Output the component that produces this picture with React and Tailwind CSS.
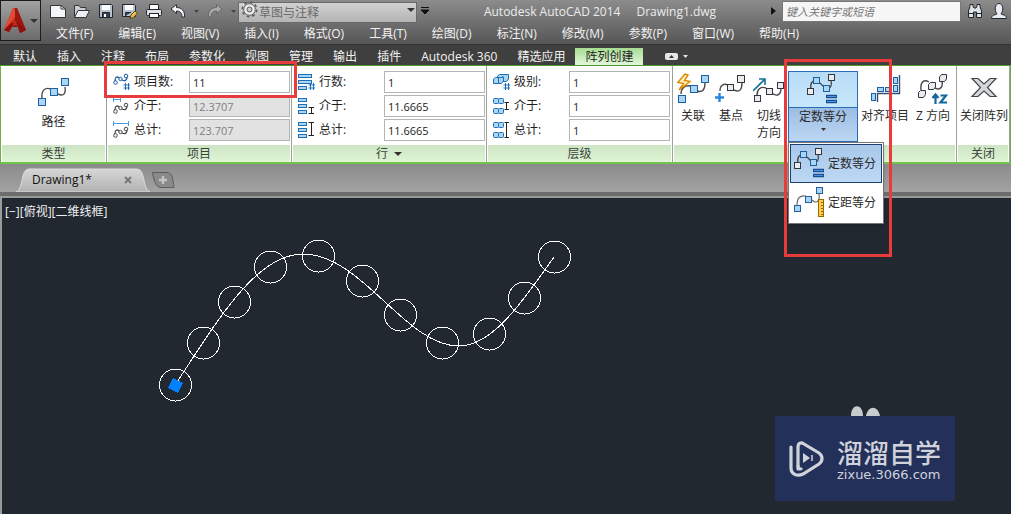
import { useState } from "react";

const MENUS = [
  "文件(F)", "编辑(E)", "视图(V)", "插入(I)", "格式(O)", "工具(T)",
  "绘图(D)", "标注(N)", "修改(M)", "参数(P)", "窗口(W)", "帮助(H)",
];

const TABS = [
  "默认", "插入", "注释", "布局", "参数化", "视图",
  "管理", "输出", "插件", "Autodesk 360", "精选应用", "阵列创建",
];

const CIRCLES = [
  [175, 385], [203, 343], [234, 302], [270, 267], [318, 256], [362, 281],
  [400, 315], [442, 343], [489, 334], [524, 298], [554, 257],
];

const BLUE = { fill: "#a9d6f5", stroke: "#1f5f9e" };
const GREY = { fill: "#e9ebee", stroke: "#33373c" };

/* ---------- large ribbon icons ---------- */

function Node({ x, y, s = 7, tone = BLUE }) {
  return <rect x={x + 0.5} y={y + 0.5} width={s} height={s} {...tone} />;
}

function Icon({ w = 32, h = 32, children, className = "" }) {
  return (
    <svg width={w} height={h} viewBox={`0 0 ${w} ${h}`} fill="none" className={`shrink-0 ${className}`} aria-hidden="true">
      {children}
    </svg>
  );
}

function PathIcon() {
  return (
    <Icon>
      <path d="M4 22C3 13 7 10 13 12M20 17C26 20 28 16 27 10" stroke="#4a4a4a" strokeWidth="1.4" />
      <Node x={23} y={1} /><Node x={12} y={11} /><Node x={0} y={21} />
    </Icon>
  );
}

function AssociateIcon() {
  return (
    <Icon>
      <path d="M4 21C4 15 8 12 13 13M20 18C26 20 28 16 28 10" stroke="#4a4a4a" strokeWidth="1.4" />
      <Node x={24} y={2} /><Node x={13} y={12} /><Node x={1} y={22} />
      <path d="M8 1L0.8 9.5L6.5 10.5L2 17L13 8.5L7.5 7.5L11 2Z" fill="#fff3c4" stroke="#e08a00" strokeWidth="1.4" />
    </Icon>
  );
}

function BasePointIcon() {
  return (
    <Icon>
      <path d="M5 18C5 12 9 10 13 12M19 17C25 20 27 16 27 10" stroke="#4a4a4a" strokeWidth="1.4" />
      <Node x={22} y={2} tone={GREY} /><Node x={12} y={11} s={6} tone={GREY} />
      <path d="M4.5 20V29M0 24.5H9" stroke="#2a86d8" strokeWidth="2.4" />
    </Icon>
  );
}

function TangentIcon() {
  return (
    <Icon>
      <path d="M4 22C4 16 8 13 13 15M19 20C25 25 28 20 28 16" stroke="#4a4a4a" strokeWidth="1.4" />
      <Node x={24} y={9} s={6} tone={GREY} /><Node x={13} y={15} s={6} tone={GREY} /><Node x={1} y={22} s={6} tone={GREY} />
      <path d="M0 18L12 6M6 6H12V12" stroke="#13729a" strokeWidth="1.6" />
    </Icon>
  );
}

function DivideIcon() {
  return (
    <Icon>
      <path d="M4 16C3 9 5 7 8 7M13 9L18 14M22 14C24 13 25 10 24 7" stroke="#4a4a4a" strokeWidth="1.4" />
      <Node x={21} y={0} s={6} tone={GREY} /><Node x={6} y={3} s={6} /><Node x={16} y={11} s={6} /><Node x={0} y={14} s={6} tone={GREY} />
      <path d="M19 22.5H30M19 27.5H30" stroke="#1a4f93" strokeWidth="3.4" />
      <path d="M20 22.5H29M20 27.5H29" stroke="#4b93dc" />
    </Icon>
  );
}

function MeasureIcon() {
  return (
    <Icon>
      <path d="M3 18C3 11 6 8 12 9M18 13C23 18 26 13 25 7" stroke="#6b6b6b" strokeWidth="1.2" />
      <Node x={22} y={0} s={6} /><Node x={11} y={9} s={6} /><Node x={0} y={18} s={6} />
      <rect x="24.5" y="12.5" width="5" height="17" fill="#ffd04a" stroke="#9a6a00" />
      <path d="M27 15.5H29M27 18.5H29M27 21.5H29M27 24.5H29M27 27.5H29" stroke="#9a6a00" />
    </Icon>
  );
}

function AlignIcon() {
  return (
    <Icon>
      <path d="M30.5 2V20.5H8.5V29" stroke="#33506e" strokeWidth="1.4" />
      <g {...BLUE}>
        <rect x="2.5" y="20.5" width="4" height="7" />
        <rect x="8.5" y="14.5" width="6" height="4" />
        <rect x="16.5" y="14.5" width="6" height="4" />
        <rect x="24.5" y="12.5" width="4" height="6" />
        <rect x="24.5" y="4.5" width="4" height="6" />
      </g>
    </Icon>
  );
}

function ZIcon() {
  return (
    <Icon>
      <path d="M4 17C3 9 7 6 12 9M18 15C24 18 26 13 25 8" stroke="#4a4a4a" strokeWidth="1.4" />
      <g {...GREY}>
        <path d="M22.5 4L24.5 1.5H29.5V6L27.5 8.5H22.5Z" />
        <path d="M11.5 11.5L13.5 9.5H18.5V14L16.5 16.5H11.5Z" />
        <path d="M1.5 19.5L3.5 17.5H8.5V21.5L6.5 24.5H1.5Z" />
      </g>
      <path d="M18.5 31V22M15.5 25L18.5 21.5L21.5 25M23.5 22.5H29L23.5 29.5H30" stroke="#14679c" strokeWidth="2.2" />
    </Icon>
  );
}

function CloseArrayIcon() {
  return (
    <Icon>
      <path
        d="M4 5.5H10L16 11L22 5.5H28L19.5 14.5L28 23.5H22L16 18L10 23.5H4L12.5 14.5Z"
        fill="#d4d6d9" stroke="#44484d" strokeWidth="1.2"
      />
    </Icon>
  );
}

/* ---------- small field icons ---------- */

const Hash = () => <path d="M12.5 10V17M15.5 10V17M10.5 12H17M10.5 15H17" stroke="#1e6fc0" />;

function ItemIcon({ kind }) {
  const stroke = kind === "count" ? "#1f5f9e" : "#4a4a4a";
  const dy = kind === "count" ? -2 : 3;
  return (
    <Icon w={17} h={18}>
      <g stroke={stroke} transform={`translate(0 ${dy})`} fill="#eef5fb">
        <path d="M2 10C2 6 4 5 6 7M9 9C13 11 14 8 14 6" fill="none" strokeWidth="1.3" />
        <circle cx="2.5" cy="11.5" r="1.8" /><circle cx="7.5" cy="8" r="1.7" /><circle cx="13" cy="5" r="1.8" />
      </g>
      {kind === "count" && <Hash />}
      {kind === "between" && <path d="M0.5 0V5M7.5 0V5M1 2.5H7" stroke="#4a9be0" />}
      {kind === "total" && <path d="M0.5 0V5M15.5 0V5M1 2.5H15" stroke="#4a9be0" />}
    </Icon>
  );
}

function RowIcon({ kind }) {
  const w = kind === "count" ? 13 : 8;
  return (
    <Icon w={17} h={18}>
      <g fill="#a9d6f5" stroke="#1f6fb5">
        <rect x="0.5" y="1.5" width={w} height="3" />
        <rect x="0.5" y="7.5" width={w} height="3" />
        <rect x="0.5" y="13.5" width="8" height="3" />
      </g>
      {kind === "count" && <Hash />}
      {kind === "between" && <path d="M10.5 10.5H16M10.5 16.5H16M13.5 10.5V16.5" stroke="#222" />}
      {kind === "total" && <path d="M10.5 1.5H16M10.5 14.5H16M13.5 1.5V14.5" stroke="#222" />}
    </Icon>
  );
}

function LevelIcon({ kind }) {
  return (
    <Icon w={17} h={18}>
      {kind === "count" ? (
        <g fill="#a9d6f5" stroke="#1f6fb5">
          <path d="M4.5 3L6.5 1.5H15.5V6L13.5 8.5H4.5ZM10 3V8" />
          <path d="M0.5 6L2.5 4.5H10.5V8L8.5 10.5H0.5ZM5.5 5V10" />
        </g>
      ) : (
        <g fill="#a9d6f5" stroke="#1f6fb5">
          <rect x="0.5" y="1.5" width="5" height="5" rx="1" />
          <rect x="5.5" y="1.5" width="5" height="5" rx="1" />
          <rect x="0.5" y="11.5" width="5" height="5" rx="1" />
          <rect x="5.5" y="11.5" width="5" height="5" rx="1" />
        </g>
      )}
      {kind === "count" && <Hash />}
      {kind === "between" && <path d="M11.5 5.5H16M11.5 12.5H16M13.5 5.5V12.5" stroke="#222" />}
      {kind === "total" && <path d="M11.5 1.5H16M11.5 16.5H16M13.5 1.5V16.5" stroke="#222" />}
    </Icon>
  );
}

/* ---------- title bar ---------- */

function Caret({ className = "text-[#333]" }) {
  return (
    <svg width="8" height="4" viewBox="0 0 8 4" className={`shrink-0 ${className}`} fill="currentColor" aria-hidden="true">
      <path d="M0 0H8L4 4Z" />
    </svg>
  );
}

function SmallCaret({ className }) {
  return (
    <svg width="5" height="3" viewBox="0 0 5 3" className={`shrink-0 ${className}`} fill="currentColor" aria-hidden="true">
      <path d="M0 0H5L2.5 3Z" />
    </svg>
  );
}

function QuickAccess() {
  return (
    <div className="flex items-center gap-2">
      <button aria-label="新建">
        <Icon w={16} h={16}><path d="M0.5 2.5H11L15.5 6V14.5H0.5Z" fill="#f4f5f7" stroke="#33373c" /><path d="M11 2.5V6H15.5" stroke="#33373c" /></Icon>
      </button>
      <button aria-label="打开">
        <Icon w={16} h={16}><path d="M0.5 14V2.5H5L6.5 4.5H12V7" fill="#c9ced6" stroke="#33373c" /><path d="M0.5 14.5L4 7.5H15.5L12 14.5Z" fill="#eef0f3" stroke="#33373c" /></Icon>
      </button>
      <button aria-label="保存">
        <Icon w={16} h={16}><path d="M1.5 1.5H13.5L14.5 2.5V14.5H1.5Z" fill="#b9c2cf" stroke="#20262e" /><rect x="4" y="2" width="8" height="5" fill="#fff" /><path d="M4.5 14V9.5H11.5V14" fill="#3a4453" stroke="#20262e" /><rect x="6" y="11" width="2" height="3" fill="#fff" /></Icon>
      </button>
      <button aria-label="另存为">
        <Icon w={16} h={16}><path d="M0.5 1.5H12.5L13.5 2.5V13.5H0.5Z" fill="#b9c2cf" stroke="#20262e" /><rect x="3" y="2" width="8" height="5" fill="#fff" /><path d="M3.5 13V9.5H9" fill="#3a4453" stroke="#20262e" /><path d="M8 15.5L9 12L13 8L15.5 10L11.5 14.5Z" fill="#f2c14e" stroke="#5b4410" /></Icon>
      </button>
      <button aria-label="打印">
        <Icon w={16} h={16}><path d="M3.5 6V1.5H12.5V6" fill="#fff" stroke="#20262e" /><rect x="0.5" y="6.5" width="15" height="6" rx="1" fill="#dde1e6" stroke="#20262e" /><rect x="3.5" y="10.5" width="9" height="4" fill="#fff" stroke="#20262e" /></Icon>
      </button>
      <button aria-label="放弃">
        <Icon w={16} h={16}><path d="M1 6L6.5 1.5V4.5C12 4.5 15 8 14.5 14H12C12 10 10 8 6.5 8V10.5Z" fill="#f1f3f6" stroke="#2b2f35" /></Icon>
      </button>
      <SmallCaret className="text-[#444]" />
      <button aria-label="重做">
        <Icon w={16} h={16}><path d="M15 6L9.5 1.5V4.5C4 4.5 1 8 1.5 14H4C4 10 6 8 9.5 8V10.5Z" fill="#a9abad" stroke="#676767" /></Icon>
      </button>
      <SmallCaret className="text-[#444]" />
    </div>
  );
}

function TitleBar() {
  return (
    <div className="flex h-[22px] items-center">
      <QuickAccess />
      <div className="relative ml-[2px] w-[179px] shrink-0">
        <svg className="pointer-events-none absolute left-[3px] top-[2px]" width="17" height="17" viewBox="0 0 17 17" fill="none" aria-hidden="true">
          <circle cx="8.5" cy="8.5" r="7.2" stroke="#5a5a5a" strokeWidth="1.6" strokeDasharray="2.8 2.85" />
          <circle cx="8.5" cy="8.5" r="5.8" fill="#ececec" stroke="#5a5a5a" />
          <circle cx="8.5" cy="8.5" r="2.5" fill="#c8c8c8" stroke="#5a5a5a" />
        </svg>
        <select aria-label="工作空间" className="h-[21px] w-full appearance-none border border-[#6a6a6a] bg-linear-to-b from-[#d2d2d2] to-[#b4b4b4] pl-5 text-[12px] leading-4 text-[#6b6b6b]">
          <option>草图与注释</option>
        </select>
        <Caret className="pointer-events-none absolute right-[2px] top-[9px] text-[#333]" />
      </div>
      <button aria-label="自定义快速访问工具栏" className="ml-1">
        <Icon w={8} h={8}><path d="M0 0.5H8M0 3H8L4 7Z" fill="#111" stroke="#111" /></Icon>
      </button>
      <div className="flex flex-1 justify-center gap-4 whitespace-nowrap pt-[2px] text-[12px] text-[#ececec]">
        <span>Autodesk AutoCAD 2014</span>
        <span>Drawing1.dwg</span>
      </div>
      <svg className="mr-[6px]" width="5" height="8" viewBox="0 0 5 8" aria-hidden="true"><path d="M0 0L5 4L0 8Z" fill="#111" /></svg>
      <input
        aria-label="搜索" placeholder="键入关键字或短语"
        className="h-[21px] w-[179px] border border-[#777] bg-[#f6f6f6] px-[3px] text-[11px] italic placeholder:text-[#777]"
      />
      <button aria-label="查找" className="ml-[6px]">
        <Icon w={16} h={16}>
          <path d="M1.5 14.5V8L3 3.5V1.5H6V3.5L7 5H9L10 3.5V1.5H13V3.5L14.5 8V14.5H9.5V9H6.5V14.5Z" fill="#dde3ea" stroke="#20262e" />
          <path d="M1.5 10.5H6.5M9.5 10.5H14.5" stroke="#20262e" />
        </Icon>
      </button>
      <button aria-label="登录" className="ml-2 mr-1">
        <Icon w={16} h={16}>
          <path d="M0.5 15.5C0.5 12 4 12 6 11C3 7 4 0.5 8 0.5C12 0.5 13 7 10 11C12 12 15.5 12 15.5 15.5Z" fill="#e9edf2" stroke="#20262e" />
        </Icon>
      </button>
    </div>
  );
}

function Header() {
  const [active, setActive] = useState("阵列创建");
  return (
    <header>
      <div className="flex h-[44px] bg-linear-to-b from-[#8c8c8c] to-[#565656]">
        <button aria-label="应用程序菜单" className="flex h-[41px] w-[41px] shrink-0 items-center justify-center gap-[3px] border border-[#1c1c1c] bg-linear-to-b from-[#a2a2a2] to-[#6b6b6b]">
          <svg width="24" height="28" viewBox="0 0 24 28" aria-hidden="true">
            <path d="M10 1H14L23 23L17 26L15 20L12 18L9 20L6 25L1 23Z" fill="#c62a1c" />
            <path d="M12 1H14L23 23L17 26L15 20L12 18Z" fill="#9c170f" />
            <path d="M10 1L12 2V10L4 20L1 23Z" fill="#e44a33" />
            <path d="M1 23L8 16H16L23 23L17 26L15 20H9L6 25Z" fill="#8b120c" />
            <path d="M9 20L12 13L15 20L12 18Z" fill="#c62a1c" />
          </svg>
          <Caret />
        </button>
        <div className="min-w-0 flex-1 pl-[9px]">
          <TitleBar />
          <nav className="flex h-[22px] items-center gap-[25px] whitespace-nowrap pl-[6px] pt-[2px] text-[12px] leading-4 text-[#f2f2f2]">
            {MENUS.map((m) => <button key={m}>{m}</button>)}
          </nav>
        </div>
      </div>
      <nav className="flex h-[21px] items-end whitespace-nowrap border-t border-[#333] bg-[#3f3f3f] pl-[3px] text-[12px] leading-4">
        {TABS.map((t) => (
          <button
            key={t}
            onClick={() => setActive(t)}
            className={`h-[17px] px-[10px] ${
              active === t
                ? "bg-linear-to-b from-[#a6dd92] to-[#e2f6da] text-[#222]"
                : "text-[#f2f2f2]"
            }`}
          >
            {t}
          </button>
        ))}
        <button aria-label="最小化功能区" className="ml-[22px] flex h-[18px] items-center gap-[5px]">
          <svg width="13" height="7" viewBox="0 0 13 7" aria-hidden="true"><rect width="13" height="7" rx="2" fill="#e6e6e6" /><path d="M4 5H9L6.5 2Z" fill="#333" /></svg>
          <SmallCaret className="text-[#e6e6e6]" />
        </button>
      </nav>
    </header>
  );
}

/* ---------- ribbon ---------- */

function Panel({ title, caret, children }) {
  return (
    <section className="relative flex min-w-0 flex-col border-r border-[#9aa39a] bg-white">
      <div className="flex-1 pt-[5px]">{children}</div>
      <h2 className="mx-px flex h-[17px] items-center justify-center gap-[6px] bg-linear-to-b from-[#cde4c5] to-[#dff5d5] text-[12px] leading-4 text-[#3b443b]">
        {title}{caret && <Caret />}
      </h2>
    </section>
  );
}

function Field({ id, icon, label, value, disabled, wide }) {
  return (
    <div className="flex h-[22px] items-center">
      {icon}
      <label htmlFor={id} className={`ml-1 shrink-0 text-[12px] text-[#1f1f1f] ${wide ? "w-[65px]" : "w-[55px]"}`}>{label}</label>
      <input
        id={id} defaultValue={value} disabled={disabled}
        className="h-[22px] w-0 flex-1 border border-[#b4b4b4] bg-white px-[3px] text-[11px] text-[#222] disabled:bg-[#e2e2e2] disabled:text-[#808080]"
      />
    </div>
  );
}

function ToolButton({ icon, label, className = "w-[38px]" }) {
  return (
    <button className={`flex shrink-0 flex-col items-center pt-[2px] text-[12px] leading-[17px] text-[#2b2b2b] ${className}`}>
      {icon}
      <span className="whitespace-pre-line pt-[2px]">{label}</span>
    </button>
  );
}

function DivideMethod() {
  const [method, setMethod] = useState("定数等分");
  const options = [
    { label: "定数等分", icon: <DivideIcon /> },
    { label: "定距等分", icon: <MeasureIcon /> },
  ];
  return (
    <div className="relative z-10 w-[70px] shrink-0">
      <button className="flex w-full flex-col items-center border border-[#2a6cb8] text-[12px] leading-[17px] text-[#2b2b2b]" aria-haspopup="menu">
        <span className="flex w-full justify-center bg-linear-to-b from-[#b9dcf6] to-[#c6e6fb] pb-px pt-[2px]"><DivideIcon /></span>
        <span className="flex h-[34px] w-full flex-col items-center border-t border-[#2a6cb8] bg-linear-to-b from-[#9cbde2] to-[#bcd7f3]">
          {method}
          <SmallCaret className="mt-[3px] text-[#333]" />
        </span>
      </button>
      <div role="menu" className="absolute left-0 top-full w-[96px] border border-[#777] bg-white p-px shadow-sm">
        {options.map((o) => (
          <button
            key={o.label} role="menuitem"
            onClick={() => setMethod(o.label)}
            className={`flex h-[39px] w-full items-center gap-[2px] whitespace-nowrap border pl-[3px] text-[12px] text-[#2b2b2b] ${
              method === o.label
                ? "border-[#1c3f6e] bg-linear-to-b from-[#a9c8ea] to-[#bcd8f4]"
                : "border-transparent"
            }`}
          >
            {o.icon}{o.label}
          </button>
        ))}
      </div>
      <div className="pointer-events-none absolute -left-1 -top-3 h-[198px] w-[108px] border-3 border-[#e83c3c]" />
    </div>
  );
}

function Ribbon() {
  return (
    <div className="grid h-[99px] grid-cols-[106fr_185fr_195fr_186fr_284fr_53fr] border-x border-b-2 border-t border-x-[#6fae4a] border-b-[#72c34e] border-t-[#4f9a2c]">
      <Panel title="类型">
        <button className="flex w-full flex-col items-center pt-[6px] text-[12px] leading-[17px] text-[#1f1f1f]">
          <PathIcon />
          <span className="pt-[4px]">路径</span>
        </button>
      </Panel>
      <Panel title="项目">
        <div className="flex flex-col gap-[2px] pl-[6px] pr-px">
          <Field id="items" icon={<ItemIcon kind="count" />} label="项目数:" value="11" />
          <Field id="items-between" icon={<ItemIcon kind="between" />} label="介于:" value="12.3707" disabled />
          <Field id="items-total" icon={<ItemIcon kind="total" />} label="总计:" value="123.707" disabled />
        </div>
        <div className="pointer-events-none absolute -left-[3px] -right-[6px] -top-[5px] z-10 h-[37px] border-3 border-[#e83c3c]" />
      </Panel>
      <Panel title="行" caret>
        <div className="flex flex-col gap-[2px] pl-[6px] pr-px">
          <Field id="rows" icon={<RowIcon kind="count" />} label="行数:" value="1" wide />
          <Field id="rows-between" icon={<RowIcon kind="between" />} label="介于:" value="11.6665" wide />
          <Field id="rows-total" icon={<RowIcon kind="total" />} label="总计:" value="11.6665" wide />
        </div>
      </Panel>
      <Panel title="层级">
        <div className="flex flex-col gap-[2px] pl-[6px] pr-[2px]">
          <Field id="levels" icon={<LevelIcon kind="count" />} label="级别:" value="1" />
          <Field id="levels-between" icon={<LevelIcon kind="between" />} label="介于:" value="1" />
          <Field id="levels-total" icon={<LevelIcon kind="total" />} label="总计:" value="1" />
        </div>
      </Panel>
      <Panel title="">
        <div className="flex items-start pl-px">
          <ToolButton icon={<AssociateIcon />} label="关联" />
          <ToolButton icon={<BasePointIcon />} label="基点" />
          <ToolButton icon={<TangentIcon />} label={"切线\n方向"} />
          <DivideMethod />
          <ToolButton icon={<AlignIcon />} label="对齐项目" className="w-[54px]" />
          <ToolButton icon={<ZIcon />} label="Z 方向" className="w-[42px]" />
        </div>
      </Panel>
      <Panel title="关闭">
        <ToolButton icon={<CloseArrayIcon />} label="关闭阵列" className="w-full whitespace-nowrap pl-[2px]" />
      </Panel>
    </div>
  );
}

/* ---------- drawing area ---------- */

function FileTabs() {
  return (
    <div className="flex h-[32px] items-start border-b-4 border-[#6c6c6c] bg-linear-to-b from-[#8b8b8b] to-[#a3a3a3] pl-[16px] pt-[4px]">
      <div className="relative flex h-6 w-[134px] items-center justify-between pl-4 pr-[18px] text-[12px] text-[#111]">
        <svg className="absolute inset-0 h-full w-full" viewBox="0 0 134 24" preserveAspectRatio="none" aria-hidden="true">
          <defs>
            <linearGradient id="tab" x1="0" y1="0" x2="0" y2="1"><stop offset="0" stopColor="#d6d6d6" /><stop offset="1" stopColor="#b2b2b2" /></linearGradient>
          </defs>
          <path d="M0 24C8 22 4 1 13 1H121C130 1 126 22 134 24Z" fill="url(#tab)" stroke="#dcdcdc" />
        </svg>
        <a href="#drawing" className="relative">Drawing1*</a>
        <button aria-label="关闭图形" className="relative">
          <svg width="8" height="8" viewBox="0 0 8 8" aria-hidden="true"><path d="M1 1L7 7M7 1L1 7" stroke="#777" strokeWidth="2" /></svg>
        </button>
      </div>
      <button aria-label="新图形" className="ml-[2px] mt-[3px]">
        <svg width="23" height="17" viewBox="0 0 23 17" aria-hidden="true">
          <path d="M0.5 1.5H15C20 1.5 21 8 22 16.5H9C3 16.5 2 8 0.5 1.5Z" fill="#8a8a8a" stroke="#5c5c5c" />
          <path d="M11 5V13M7 9H15" stroke="#c4c4c4" strokeWidth="2.4" />
        </svg>
      </button>
    </div>
  );
}

function Watermark() {
  return (
    <div className="absolute bottom-[13px] right-14 w-[180px]">
      <svg className="ml-[75px] block" width="31" height="10" viewBox="0 0 31 10" aria-hidden="true">
        <path d="M1 10C1 -3 13 -3 13 10ZM16 10C18 -1 28 -1 30 10Z" fill="#c9cccf" />
      </svg>
      <div className="flex h-[85px] items-center gap-[13px] bg-[#22305a] pl-[14px] text-[#d0d3da]">
        <svg width="35" height="36" viewBox="0 0 35 36" fill="none" aria-hidden="true">
          <path d="M9 28V6C9 2 12 1 15 3L30 12C34 15 34 20 30 23L14 33C8 36 2 33 2 27V6" stroke="#d0d3da" strokeWidth="3.2" strokeLinecap="round" />
          <path d="M9 24C9 28 11 29 13 27" stroke="#d0d3da" strokeWidth="3" />
          <path d="M14 12L21 17L14 22Z" fill="#d0d3da" />
          <path d="M23 14V20" stroke="#d0d3da" strokeWidth="1.5" />
        </svg>
        <div>
          <p className="text-[26px] font-medium leading-8">溜溜自学</p>
          <p className="font-['DejaVu_Sans',sans-serif] text-[13px] leading-3">zixue.3066.com</p>
        </div>
      </div>
    </div>
  );
}

function Drawing() {
  return (
    <main id="drawing" className="relative flex-1 border-l-2 border-t-2 border-[#9a9a9a] bg-[#212830]">
      <p className="absolute left-[3px] top-[6px] text-[12px] leading-4 text-[#f0f0f0]">[−][俯视][二维线框]</p>
      <svg className="block" width="640" height="300" viewBox="2 198 640 300" fill="none" stroke="#fff" shapeRendering="crispEdges" role="img" aria-label="路径阵列">
        <path d="M175 385C215 325 255 254 303 254C362 254 405 346 459 346C495 346 528 293 554 257" />
        {CIRCLES.map(([x, y]) => <circle key={x} cx={x + 0.5} cy={y} r="16" />)}
        <path d="M173 378L183 383L178 393L168 388Z" fill="#007fff" stroke="none" />
      </svg>
      <Watermark />
    </main>
  );
}

export default function App() {
  return (
    <div className="flex min-h-screen flex-col overflow-hidden bg-[#212830] font-['Open_Sans','Noto_Sans_CJK_SC',sans-serif]">
      <Header />
      <Ribbon />
      <FileTabs />
      <Drawing />
    </div>
  );
}
